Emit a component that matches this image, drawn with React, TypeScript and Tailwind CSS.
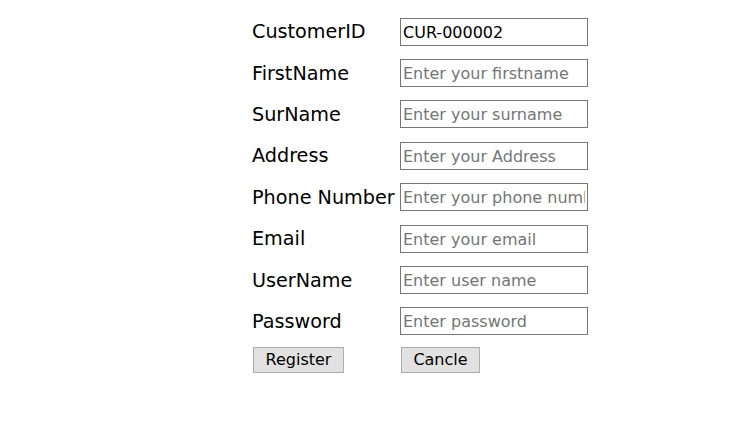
const fields = [
  { label: "CustomerID", value: "CUR-000002", placeholder: "" },
  { label: "FirstName", value: "", placeholder: "Enter your firstname" },
  { label: "SurName", value: "", placeholder: "Enter your surname" },
  { label: "Address", value: "", placeholder: "Enter your Address" },
  { label: "Phone Number", value: "", placeholder: "Enter your phone number" },
  { label: "Email", value: "", placeholder: "Enter your email" },
  { label: "UserName", value: "", placeholder: "Enter user name" },
  { label: "Password", value: "", placeholder: "Enter password" },
];

export default function App() {
  return (
    <div className="min-h-screen bg-white pl-[252px] pt-[11px] text-black [font-family:'DejaVu_Sans',sans-serif]">
      <div className="grid grid-cols-[148px_188px]">
        {fields.map((f) => (
          <div key={f.label} className="contents">
            <div className="flex h-[41.4px] items-center pt-[2px] text-[19.2px]">{f.label}</div>
            <div className="flex h-[41.4px] items-center">
              <input
                readOnly
                defaultValue={f.value}
                placeholder={f.placeholder}
                className="h-[28px] w-[188px] border border-[#767676] px-[2px] pt-[1px] text-[16px] outline-none placeholder:text-[#757575]"
              />
            </div>
          </div>
        ))}
        <div className="pt-[5px]">
          <button className="ml-[1px] h-[26px] w-[91px] border border-[#adadad] bg-[#e1e1e1] text-[16px] leading-none">
            Register
          </button>
        </div>
        <div className="pt-[5px]">
          <button className="ml-[1px] h-[26px] w-[79px] border border-[#adadad] bg-[#e1e1e1] text-[16px] leading-none">
            Cancle
          </button>
        </div>
      </div>
    </div>
  );
}
